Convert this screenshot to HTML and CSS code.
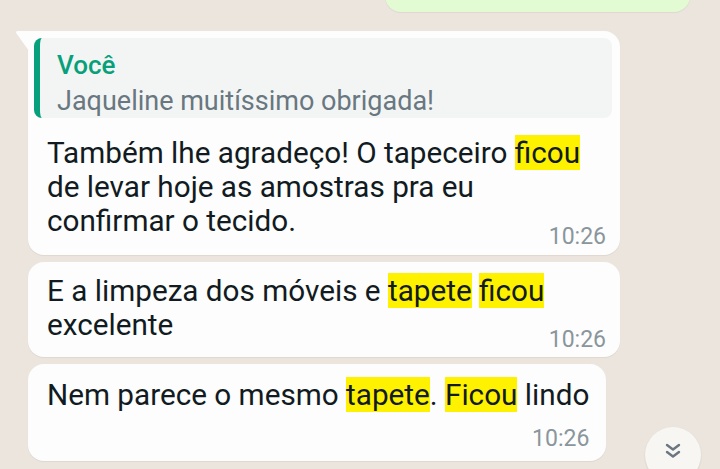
FILE: index.html
```html
<!DOCTYPE html>
<html lang="pt">
<head>
<meta charset="utf-8">
<title>Chat</title>
<link rel="stylesheet" href="styles.css">
</head>
<body>
<div class="chat">
  <div class="bubble out"><span class="meta out-meta">10:25</span></div>

  <div class="bubble in first">
    <svg class="tail" width="14" height="20" viewBox="0 0 14 20"><path d="M14 0 L3 0 Q0 0 1.5 2.5 L14 20 Z" fill="#fdfdfd"/></svg>
    <div class="quote">
      <div class="quote-name">Você</div>
      <div class="quote-text">Jaqueline muitíssimo obrigada!</div>
    </div>
    <p class="text">Também lhe agradeço! O tapeceiro <mark>ficou</mark> de levar hoje as amostras pra eu confirmar o tecido.</p>
    <span class="meta">10:26</span>
  </div>

  <div class="bubble in second">
    <p class="text">E a limpeza dos móveis e <mark>tapete</mark> <mark>ficou</mark> excelente</p>
    <span class="meta">10:26</span>
  </div>

  <div class="bubble in third">
    <p class="text">Nem parece o mesmo <mark>tapete</mark>. <mark>Ficou</mark> lindo</p>
    <span class="meta">10:26</span>
  </div>

  <button class="scroll-down" aria-label="Rolar para baixo">
    <svg width="20" height="18" viewBox="0 0 20 18"><path d="M4 3 L10 7.5 L16 3 M4 10 L10 14.5 L16 10" fill="none" stroke="#6b7780" stroke-width="2.4" stroke-linecap="round" stroke-linejoin="round"/></svg>
  </button>
</div>
</body>
</html>
```

FILE: styles.css
```css
html, body {
  margin: 0;
  padding: 0;
}
body {
  width: 720px;
  height: 469px;
  overflow: hidden;
  background: #ebe5dd;
  font-family: Roboto, "Noto Sans", sans-serif;
}
.chat {
  position: relative;
  height: 469px;
  display: flex;
  flex-direction: column;
  align-items: flex-start;
}
.bubble {
  position: relative;
  background: #fdfdfd;
  border-radius: 16px;
  box-sizing: border-box;
  box-shadow: 0 1px 1px rgba(0,0,0,0.06);
}
.bubble.out {
  align-self: flex-end;
  margin-right: 30px;
  margin-top: -30px;
  width: 305px;
  height: 42px;
  background: #e2fbd3;
  display: flex;
  justify-content: flex-end;
  align-items: flex-end;
  padding: 0 50px 7px 0;
}
.out-meta {
  color: #a3aea3;
}
.bubble.in {
  margin-left: 28px;
}
.first {
  margin-top: 19px;
  width: 592px;
  padding: 7px 8px 6px 6px;
  border-top-left-radius: 0;
}
.tail {
  position: absolute;
  left: -13px;
  top: 0;
}
.quote {
  background: #f3f5f5;
  border-left: 6px solid #06a17c;
  border-radius: 8px;
  height: 80px;
  box-sizing: border-box;
  padding: 11px 0 0 17px;
}
.quote-name {
  color: #07a07a;
  font-weight: 500;
  font-size: 26px;
  line-height: 32px;
}
.quote-text {
  color: #687780;
  font-size: 27px;
  line-height: 40px;
  white-space: nowrap;
}
.text {
  margin: 0;
  font-size: 29.7px;
  line-height: 34px;
  color: #111b21;
}
.first .text {
  margin-top: 18px;
  padding: 0 8px 0 13px;
}
mark {
  background: #fff200;
  color: #111b21;
}
.meta {
  display: block;
  text-align: right;
  color: #8a969c;
  font-size: 23px;
  line-height: 24px;
}
.first .meta {
  margin-top: -13px;
  padding-right: 6px;
}
.second {
  margin-top: 7px;
  width: 592px;
  padding: 12px 14px 5px 19px;
}
.second .meta {
  margin-top: -14px;
}
.third {
  margin-top: 7px;
  padding: 14px 17px 10px 19px;
}
.third .meta {
  margin-top: 15px;
}
.scroll-down {
  position: absolute;
  left: 645px;
  top: 427px;
  width: 56px;
  height: 56px;
  border-radius: 50%;
  border: none;
  background: #f7f6f3;
  box-shadow: 0 1px 2px rgba(0,0,0,0.1);
  display: flex;
  align-items: center;
  justify-content: center;
  padding: 0 0 8px 0;
}
```
